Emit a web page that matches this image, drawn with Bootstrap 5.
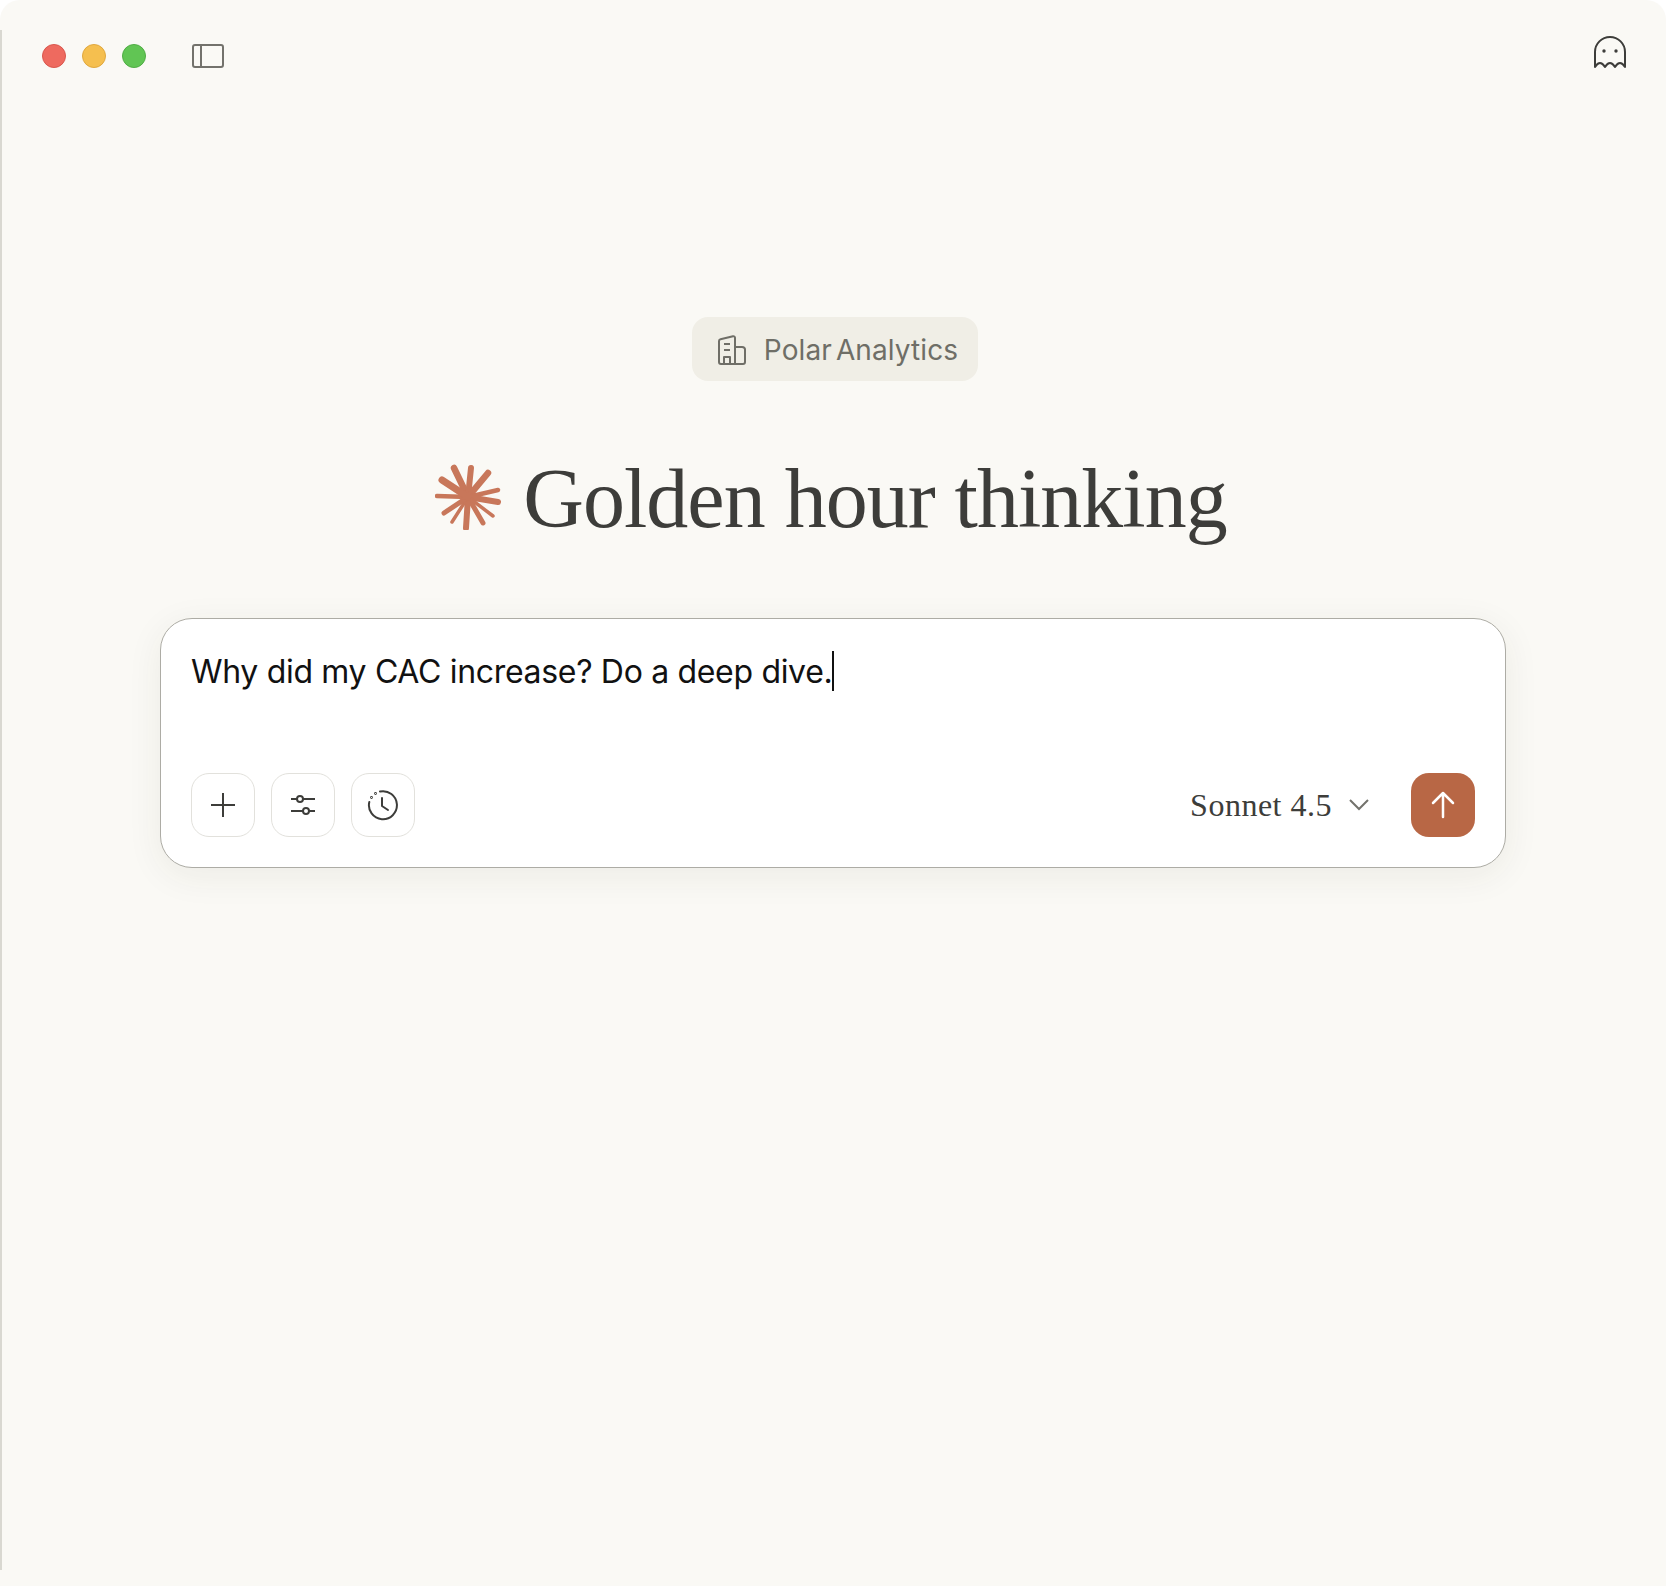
<!DOCTYPE html>
<html lang="en">
<head>
  <meta charset="UTF-8" />
  <meta name="viewport" content="width=device-width, initial-scale=1" />
  <title>Golden hour thinking</title>
  <link href="https://cdn.jsdelivr.net/npm/bootstrap@5.3.3/dist/css/bootstrap.min.css" rel="stylesheet" />
  <style>
    html, body { height: 100%; background: #fff; }
    .app-window {
      height: 1586px; overflow: hidden; border-radius: 20px 20px 0 0;
      background: linear-gradient(#d9d8d1, #d9d8d1) left 0 top 30px / 2px 1540px no-repeat, #faf9f5;
    }
    .title-bar { padding: 36px 40px 0 42px; height: 317px; }
    .light { width: 24px; height: 24px; border-radius: 50%; border: 1px solid; }
    .light-red { background: #ee6a5f; border-color: #d9574d; }
    .light-yellow { background: #f5bf4f; border-color: #e0a83e; }
    .light-green { background: #61c554; border-color: #50ad45; }
    .lights { gap: 16px; margin-top: 8px; }
    .side-icon { margin-left: 46px; margin-top: 8px; }
    .org-chip {
      width: 286px; height: 64px; margin-left: 4px; padding: 2px 0 0 6px; background: #f0eee6; border-radius: 16px; gap: 18px;
      color: #6f6e67; font-family: Inter, sans-serif; font-size: 28px; letter-spacing: .1px; word-spacing: -4px;
    }
    .greeting {
      margin: 70px 0 0 -4px; gap: 22px; color: #3d3d3a;
      font-family: "Liberation Serif", serif; font-size: 84px; font-weight: 400; letter-spacing: -1px; line-height: 96px;
    }
    .spark-icon { margin-bottom: 5px; }
    .prompt-box {
      width: 1346px; height: 250px; margin-top: 71px; background: #fff; border: 1px solid #adaca5; border-radius: 32px;
      padding: 30px; box-shadow: 0 8px 36px rgba(60, 50, 30, .07);
    }
    .prompt-text { color: #111; font-family: Inter, sans-serif; font-size: 32px; letter-spacing: -0.32px; line-height: 46px; }
    .caret { display: inline-block; width: 2px; height: 40px; background: #111; vertical-align: -8px; }
    .tool-btn {
      width: 64px; height: 64px; padding: 0; background: #fff; border: 1px solid #e2e1dc; border-radius: 18px;
    }
    .tool-btn:hover { background: #f5f4ef; border-color: #e2e1dc; }
    .model-name { color: #3d3d3a; font-family: "Liberation Serif", serif; font-size: 32px; letter-spacing: .5px; margin-right: 17px; }
    .send-btn { width: 64px; height: 64px; padding: 0; margin-left: 42px; background: #b86745; border: 0; border-radius: 18px; }
    .send-btn:hover { background: #a95c3c; }
  </style>
</head>
<body>

  <div class="app-window">
    <div class="title-bar d-flex justify-content-between align-items-start">
      <div class="d-flex align-items-start">
        <div class="lights d-flex">
          <div class="light light-red"></div>
          <div class="light light-yellow"></div>
          <div class="light light-green"></div>
        </div>
        <svg class="side-icon" width="32" height="24" viewBox="0 0 32 24" fill="none" stroke="#73726c" stroke-width="2">
          <rect x="1" y="1" width="30" height="22" rx="2" />
          <line x1="9" y1="1" x2="9" y2="23" />
        </svg>
      </div>
      <svg width="32" height="32" viewBox="0 0 32 32" fill="none" stroke="#3d3d3a" stroke-width="2" stroke-linejoin="round">
        <path d="M1 31V16A15 15 0 0 1 31 16V31Q26 23 21 31Q16 23 11 31Q6 23 1 31z" />
        <circle cx="10" cy="15" r="1.700" fill="#3d3d3a" stroke="none" />
        <circle cx="22" cy="15" r="1.700" fill="#3d3d3a" stroke="none" />
      </svg>
    </div>

    <div class="d-flex flex-column align-items-center">
      <div class="org-chip d-flex align-items-center justify-content-center">
        <svg width="28" height="30" viewBox="0 0 28 30" fill="none" stroke="#6f6e67" stroke-width="2" stroke-linejoin="round">
          <path d="M1 27V6c0-1 .6-1.600 1.500-1.800L15 1.200c1-.2 2 .4 2 1.600V29H3c-1.200 0-2-.8-2-2z" />
          <path d="M17 12h7c1.500 0 3 1 3 2.500V27c0 1.200-.8 2-2 2h-8" />
          <path d="M6 9h6M6 15h6M6 29v-7h6v7" />
        </svg>
        <span>Polar Analytics</span>
      </div>

      <h1 class="greeting d-flex align-items-center">
        <svg class="spark-icon" width="66" height="66" viewBox="-33 -33 66 66" stroke="#c8775a" stroke-linecap="round" fill="none">
          <circle r="8" fill="#c8775a" stroke="none" />
          <line x1="0" y1="0" x2="-14" y2="-29" stroke-width="6.500" />
          <line x1="0" y1="0" x2="3" y2="-29" stroke-width="6" />
          <line x1="0" y1="0" x2="20" y2="-24" stroke-width="6.500" />
          <line x1="0" y1="0" x2="30" y2="-7" stroke-width="4.500" />
          <line x1="0" y1="0" x2="30" y2="5" stroke-width="6" />
          <line x1="0" y1="0" x2="25" y2="19" stroke-width="3.500" />
          <line x1="0" y1="0" x2="15" y2="26" stroke-width="5" />
          <line x1="0" y1="0" x2="-2" y2="31" stroke-width="6" />
          <line x1="0" y1="0" x2="-16" y2="25" stroke-width="3.500" />
          <line x1="0" y1="0" x2="-24" y2="16" stroke-width="5" />
          <line x1="0" y1="0" x2="-31" y2="-1" stroke-width="4.500" />
          <line x1="0" y1="0" x2="-26" y2="-17" stroke-width="7" />
        </svg>
        <span>Golden hour thinking</span>
      </h1>

      <div class="prompt-box d-flex flex-column justify-content-between">
        <div class="prompt-text">Why did my CAC increase? Do a deep dive.<span class="caret"></span></div>
        <div class="d-flex align-items-center justify-content-between">
          <div class="d-flex gap-3">
            <button type="button" class="btn tool-btn d-flex align-items-center justify-content-center" aria-label="Add">
              <svg width="24" height="24" viewBox="0 0 24 24" stroke="#3d3d3a" stroke-width="2"><path d="M12 0v24M0 12h24" /></svg>
            </button>
            <button type="button" class="btn tool-btn d-flex align-items-center justify-content-center" aria-label="Settings">
              <svg width="26" height="22" viewBox="0 0 26 22" fill="none" stroke="#3d3d3a" stroke-width="2">
                <path d="M1 5h6M13 5h12M1 17h12M19 17h6" />
                <circle cx="10" cy="5" r="3" /><circle cx="16" cy="17" r="3" />
              </svg>
            </button>
            <button type="button" class="btn tool-btn d-flex align-items-center justify-content-center" aria-label="History">
              <svg width="32" height="32" viewBox="0 0 32 32" fill="none" stroke="#3d3d3a" stroke-width="2" stroke-linecap="round">
                <path d="M13 2.500A14 14 0 1 1 2.300 13" />
                <path d="M15 9v8l6 4" stroke-linejoin="round" />
                <circle cx="4.500" cy="8.500" r=".4" /><circle cx="8.500" cy="4.500" r=".4" />
              </svg>
            </button>
          </div>
          <div class="d-flex align-items-center">
            <span class="model-name">Sonnet 4.5</span>
            <svg width="20" height="12" viewBox="0 0 20 12" fill="none" stroke="#73726c" stroke-width="2"><path d="M1 1l9 9 9-9" /></svg>
            <button type="button" class="btn send-btn d-flex align-items-center justify-content-center" aria-label="Send">
              <svg width="24" height="28" viewBox="0 0 24 28" fill="none" stroke="#fff" stroke-width="2.500" stroke-linecap="round" stroke-linejoin="round"><path d="M12 26V2M2 12L12 2l10 10" /></svg>
            </button>
          </div>
        </div>
      </div>
    </div>
  </div>

  <script src="https://cdn.jsdelivr.net/npm/bootstrap@5.3.3/dist/js/bootstrap.bundle.min.js"></script>
</body>
</html>
